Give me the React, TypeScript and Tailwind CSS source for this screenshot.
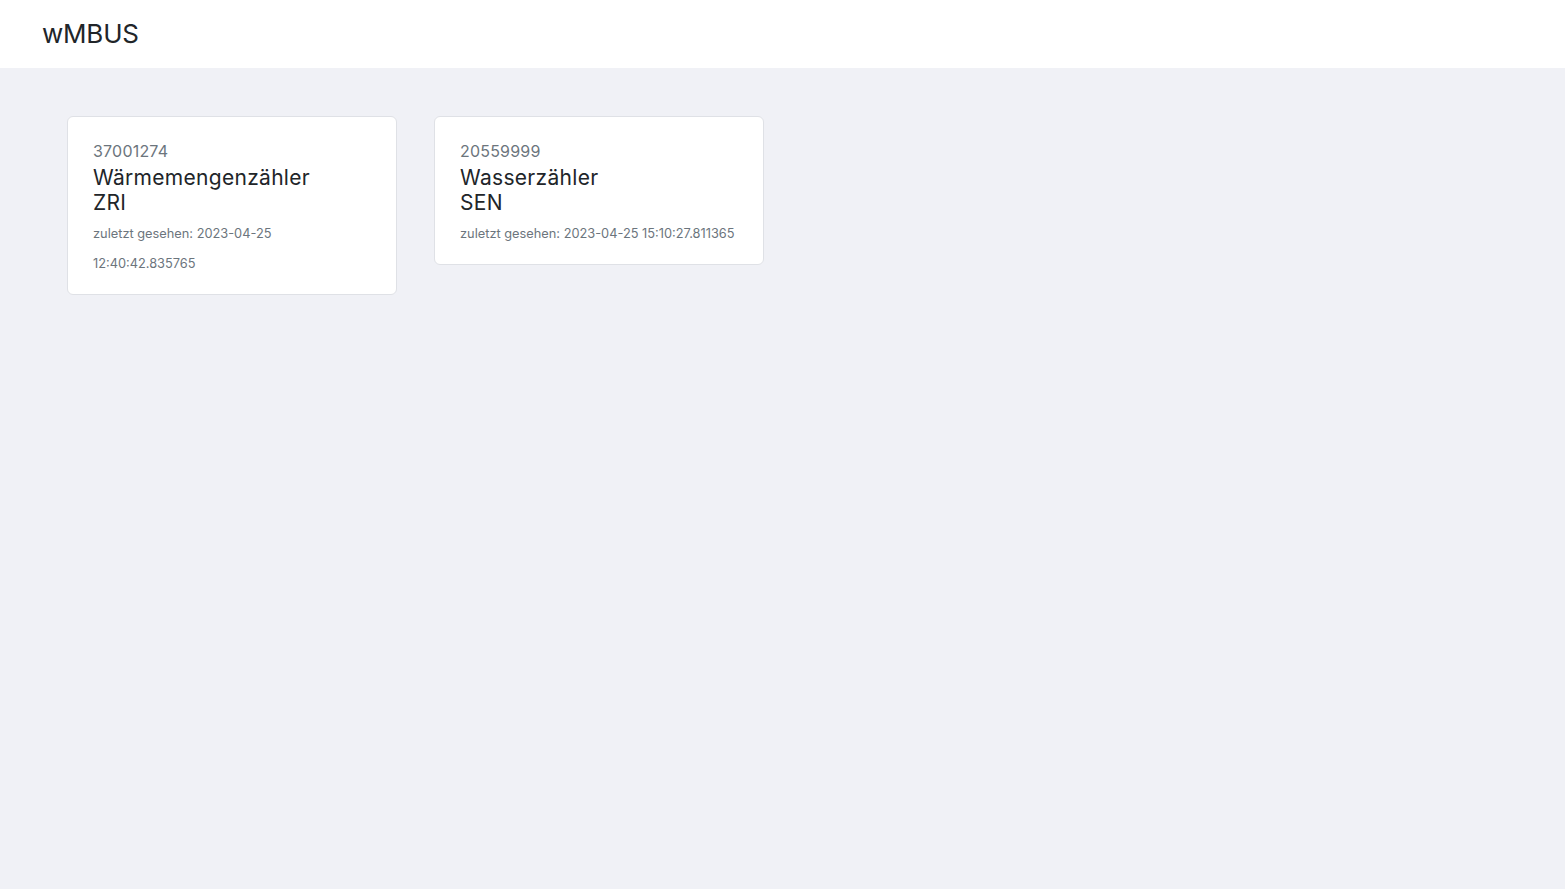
import React from "react";

type Meter = { id: string; name: string; vendor: string; lastSeen: string };

const meters: Meter[] = [
  { id: "37001274", name: "Wärmemengenzähler", vendor: "ZRI", lastSeen: "2023-04-25 12:40:42.835765" },
  { id: "20559999", name: "Wasserzähler", vendor: "SEN", lastSeen: "2023-04-25 15:10:27.811365" },
];

function MeterCard({ m }: { m: Meter }) {
  return (
    <div className="w-[330px] rounded-md border border-[#dfe1e6] bg-white px-[25px] pt-[23px] pb-[15px] self-start">
      <div className="text-[16px] leading-[22px] text-[#6c757d] tracking-[0.2px]">{m.id}</div>
      <div className="mt-[3px] text-[21px] leading-[25px] text-[#212529] tracking-[0.3px]">
        {m.name}
        <br />
        {m.vendor}
      </div>
      <div className="mt-[4px] text-[12.8px] leading-[30px] text-[#6c757d]">zuletzt gesehen: {m.lastSeen}</div>
    </div>
  );
}

export default function App() {
  return (
    <div className="min-h-screen bg-[#f0f1f6] font-['Inter',sans-serif]">
      <header className="h-[68px] bg-white flex items-center px-[42px] pb-[2px]">
        <div className="text-[26px] text-[#212529] tracking-[-0.2px]">wMBUS</div>
      </header>
      <main className="flex items-start gap-[37px] px-[67px] pt-[48px]">
        {meters.map((m) => (
          <MeterCard key={m.id} m={m} />
        ))}
      </main>
    </div>
  );
}
